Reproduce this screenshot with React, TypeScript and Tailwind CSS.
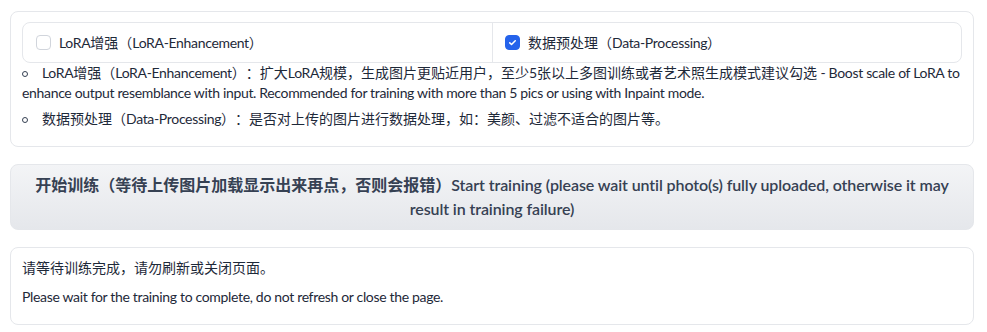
import React, { useState } from 'react';

const font = { fontFamily: '"Source Sans Pro", Lato, "Noto Sans CJK SC", sans-serif' };

// Lato runs a bit wider than the original font, so English runs get tightened
function E({ children, bold }: { children: React.ReactNode; bold?: boolean }) {
  return <span className={bold ? 'tracking-[-0.1px]' : 'tracking-[-0.33px]'}>{children}</span>;
}

function Check({ checked, onClick }: { checked: boolean; onClick: () => void }) {
  return (
    <span
      onClick={onClick}
      className={
        'flex h-[15px] w-[15px] shrink-0 items-center justify-center rounded-[4px] border ' +
        (checked ? 'border-[#2563eb] bg-[#2563eb]' : 'border-gray-300 bg-white')
      }
    >
      {checked && (
        <svg viewBox="0 0 16 16" className="h-[11px] w-[11px]" fill="none" stroke="white" strokeWidth="2.2" strokeLinecap="round" strokeLinejoin="round">
          <path d="M4 8.5l2.6 2.5L12 5.5" />
        </svg>
      )}
    </span>
  );
}

function Dot() {
  return <span className="mr-[14px] inline-block h-[6px] w-[6px] rounded-full border border-gray-700 align-middle" />;
}

export default function App() {
  const [lora, setLora] = useState(false);
  const [proc, setProc] = useState(true);

  return (
    <div className="min-h-screen bg-white px-[10px] pt-[11px] text-gray-800 [text-spacing-trim:space-all]" style={font}>
      <div className="flex w-[964px] flex-col gap-[17px]">
        {/* 选项 */}
        <div className="rounded-lg border border-gray-200 px-[11px] pt-[10px] pb-[17px]">
          <div className="flex h-[41px] rounded-lg border border-gray-200">
            <label className="flex flex-1 items-center gap-[8px] border-r border-gray-200 pl-[13px] text-sm">
              <Check checked={lora} onClick={() => setLora(!lora)} />
              <span>
                <E>LoRA</E>增强（<E>LoRA-Enhancement</E>）
              </span>
            </label>
            <label className="flex flex-1 items-center gap-[8px] pl-[12px] text-sm">
              <Check checked={proc} onClick={() => setProc(!proc)} />
              <span>
                数据预处理（<E>Data-Processing</E>）
              </span>
            </label>
          </div>
          <ul className="flex flex-col gap-[6px] text-sm leading-5">
            <li>
              <Dot />
              <E>LoRA</E>增强（<E>LoRA-Enhancement</E>）：扩大<E>LoRA</E>规模，生成图片更贴近用户，至少<E>5</E>张以上多图训练或者艺术照生成模式建议勾选{' '}
              <E>
                - Boost scale of LoRA to enhance output resemblance with input. Recommended for training with more than 5 pics or using with Inpaint mode.
              </E>
            </li>
            <li>
              <Dot />
              数据预处理（<E>Data-Processing</E>）：是否对上传的图片进行数据处理，如：美颜、过滤不适合的图片等。
            </li>
          </ul>
        </div>

        {/* 开始训练 */}
        <button className="rounded-lg border border-gray-200 bg-gradient-to-b from-gray-100 to-gray-200 px-6 py-[8px] text-center text-base leading-6 font-semibold text-gray-700">
          开始训练（等待上传图片加载显示出来再点，否则会报错）
          <E bold>Start training (please wait until photo(s) fully uploaded, otherwise it may result in training failure)</E>
        </button>

        {/* 提示 */}
        <div className="rounded-lg border border-gray-200 px-[11px] pt-[10px] pb-[17px] text-sm leading-5">
          <p>请等待训练完成，请勿刷新或关闭页面。</p>
          <p className="mt-[9px]">
            <E>Please wait for the training to complete, do not refresh or close the page.</E>
          </p>
        </div>
      </div>
    </div>
  );
}
